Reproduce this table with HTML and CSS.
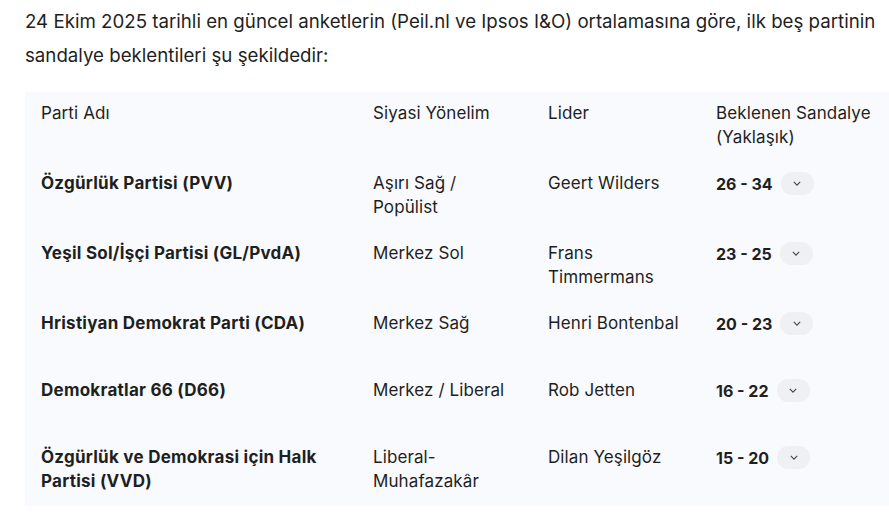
FILE: index.html
```html
<!DOCTYPE html>
<html lang="tr">
<head>
<meta charset="utf-8">
<link rel="stylesheet" href="styles.css">
</head>
<body>
<div class="page">
  <p class="intro">24 Ekim 2025 tarihli en güncel anketlerin (Peil.nl ve Ipsos I&amp;O) ortalamasına göre, ilk beş partinin sandalye beklentileri şu şekildedir:</p>
  <table class="tbl">
    <colgroup>
      <col class="c1"><col class="c2"><col class="c3"><col class="c4">
    </colgroup>
    <thead>
      <tr><th>Parti Adı</th><th>Siyasi Yönelim</th><th>Lider</th><th>Beklenen Sandalye<br>(Yaklaşık)</th></tr>
    </thead>
    <tbody>
      <tr><td class="party">Özgürlük Partisi (PVV)</td><td>Aşırı Sağ /<br>Popülist</td><td>Geert Wilders</td><td><div class="seats"><b>26 - 34</b><span class="chip"><svg viewBox="0 0 10 6" width="8" height="5"><path d="M1 1l4 4 4-4" fill="none" stroke="#444746" stroke-width="1.4"/></svg></span></div></td></tr>
      <tr><td class="party">Yeşil Sol/İşçi Partisi (GL/PvdA)</td><td>Merkez Sol</td><td>Frans<br>Timmermans</td><td><div class="seats"><b>23 - 25</b><span class="chip"><svg viewBox="0 0 10 6" width="8" height="5"><path d="M1 1l4 4 4-4" fill="none" stroke="#444746" stroke-width="1.4"/></svg></span></div></td></tr>
      <tr><td class="party">Hristiyan Demokrat Parti (CDA)</td><td>Merkez Sağ</td><td>Henri Bontenbal</td><td><div class="seats"><b>20 - 23</b><span class="chip"><svg viewBox="0 0 10 6" width="8" height="5"><path d="M1 1l4 4 4-4" fill="none" stroke="#444746" stroke-width="1.4"/></svg></span></div></td></tr>
      <tr><td class="party">Demokratlar 66 (D66)</td><td>Merkez / Liberal</td><td>Rob Jetten</td><td><div class="seats"><b>16 - 22</b><span class="chip"><svg viewBox="0 0 10 6" width="8" height="5"><path d="M1 1l4 4 4-4" fill="none" stroke="#444746" stroke-width="1.4"/></svg></span></div></td></tr>
      <tr><td class="party">Özgürlük ve Demokrasi için Halk<br>Partisi (VVD)</td><td>Liberal-<br>Muhafazakâr</td><td>Dilan Yeşilgöz</td><td><div class="seats"><b>15 - 20</b><span class="chip"><svg viewBox="0 0 10 6" width="8" height="5"><path d="M1 1l4 4 4-4" fill="none" stroke="#444746" stroke-width="1.4"/></svg></span></div></td></tr>
    </tbody>
  </table>
</div>
</body>
</html>
```
FILE: styles.css
```css
html, body {
  margin: 0;
  padding: 0;
  background: #ffffff;
  overflow: hidden;
}
body {
  font-family: Inter, Roboto, "Noto Sans", Arial, sans-serif;
  color: #1f1f1f;
  font-size: 16px;
}
.page {
  padding: 5px 0 0 25px;
  width: 880px;
}
.intro {
  margin: 0 0 19px 0;
  font-size: 18.7px;
  line-height: 34px;
  width: 862px;
}
.tbl {
  border-collapse: collapse;
  background: #f8fafd;
  width: 880px;
  table-layout: fixed;
}
.c1 { width: 332px; }
.c2 { width: 175px; }
.c3 { width: 168px; }
.c4 { width: 205px; }
.tbl th, .tbl td {
  text-align: left;
  vertical-align: top;
  font-weight: 400;
  font-size: 17px;
  letter-spacing: 0.1px;
  line-height: 24px;
  padding: 9px 16px 13px 16px;
}
.tbl td.party {
  font-weight: 700;
  letter-spacing: 0.25px;
}
.seats {
  display: flex;
  align-items: flex-start;
  gap: 8px;
  min-height: 45px;
}
.seats b {
  font-weight: 700;
  font-size: 16px;
  letter-spacing: 0;
  line-height: 26px;
}
.chip {
  display: inline-flex;
  align-items: center;
  justify-content: center;
  width: 33px;
  height: 23px;
  border-radius: 12px;
  background: #eef0f4;
  margin-top: 1px;
}
```
